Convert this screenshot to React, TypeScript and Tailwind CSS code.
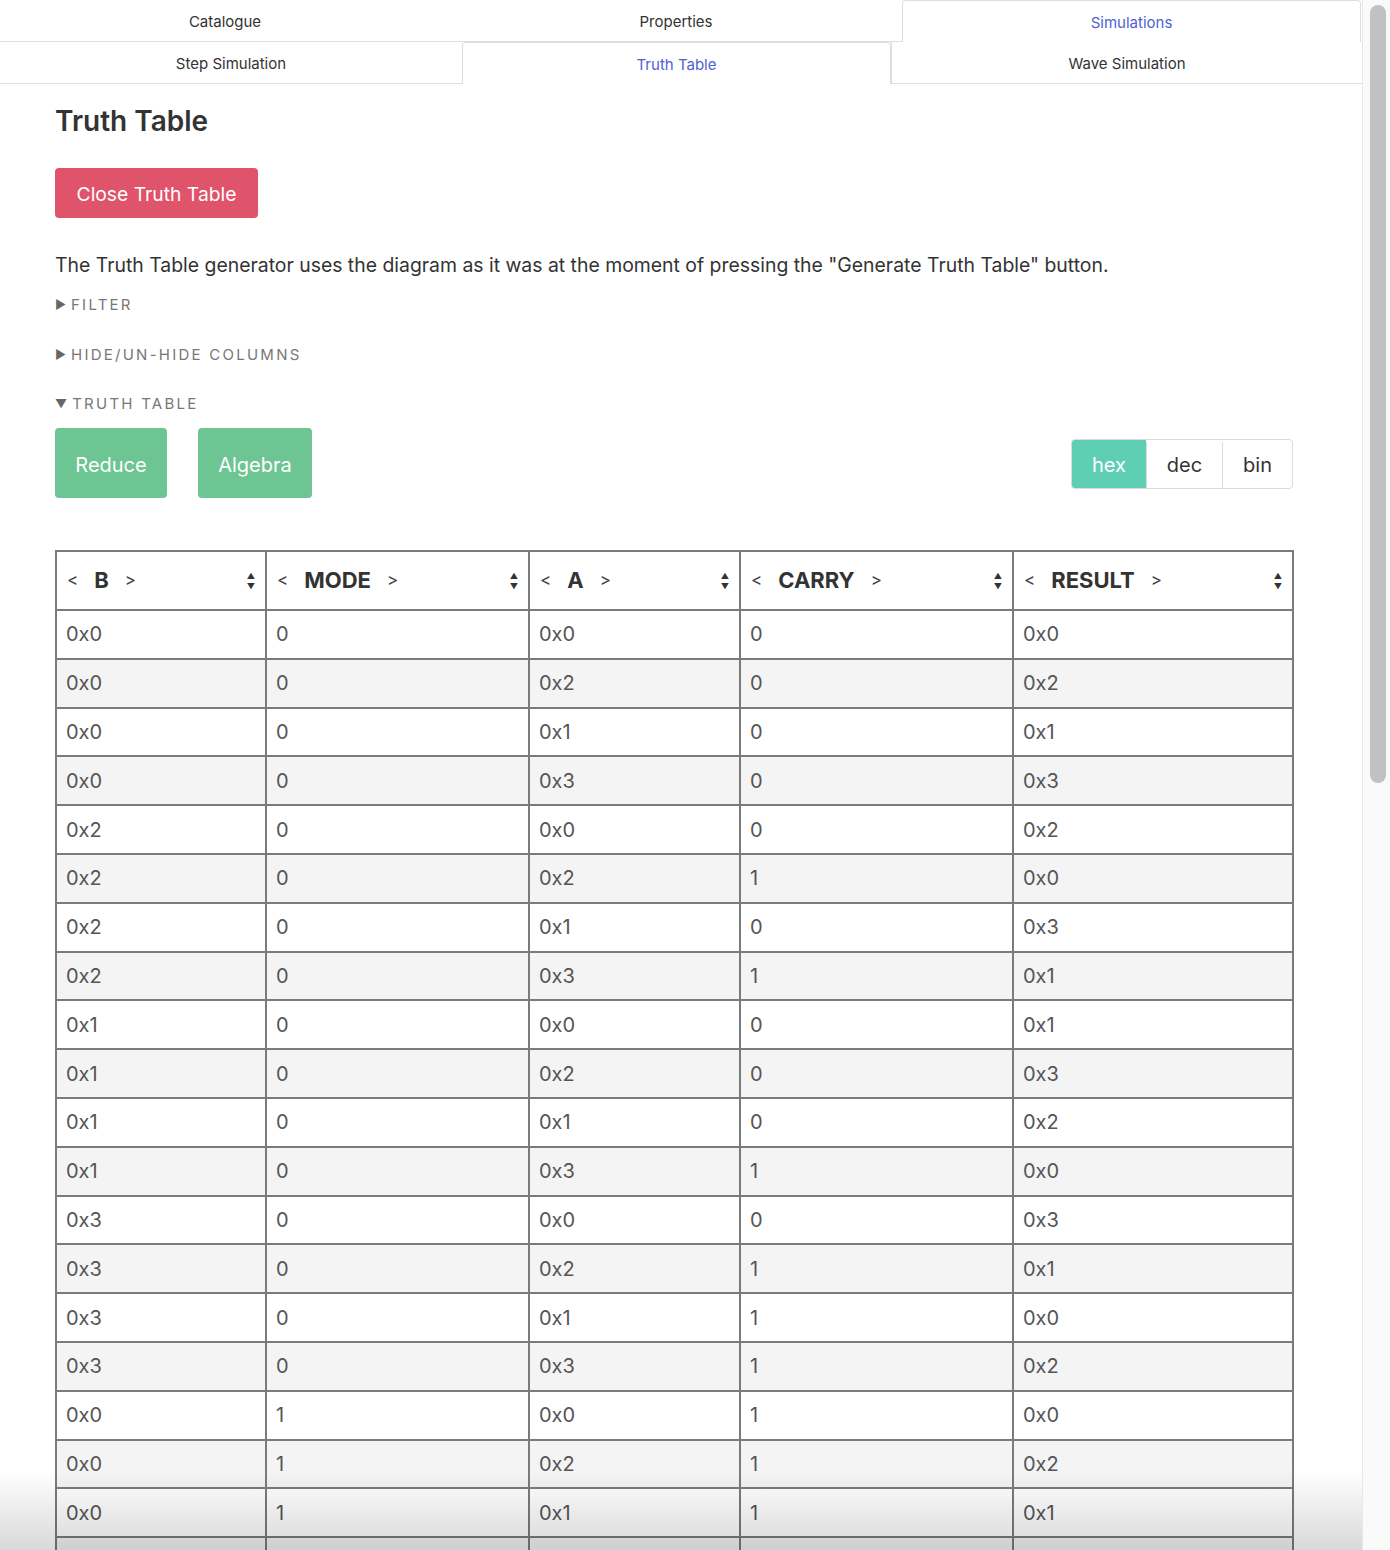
import React from "react";

type Row = [string, string, string, string, string];

const rows: Row[] = [
  ["0x0", "0", "0x0", "0", "0x0"],
  ["0x0", "0", "0x2", "0", "0x2"],
  ["0x0", "0", "0x1", "0", "0x1"],
  ["0x0", "0", "0x3", "0", "0x3"],
  ["0x2", "0", "0x0", "0", "0x2"],
  ["0x2", "0", "0x2", "1", "0x0"],
  ["0x2", "0", "0x1", "0", "0x3"],
  ["0x2", "0", "0x3", "1", "0x1"],
  ["0x1", "0", "0x0", "0", "0x1"],
  ["0x1", "0", "0x2", "0", "0x3"],
  ["0x1", "0", "0x1", "0", "0x2"],
  ["0x1", "0", "0x3", "1", "0x0"],
  ["0x3", "0", "0x0", "0", "0x3"],
  ["0x3", "0", "0x2", "1", "0x1"],
  ["0x3", "0", "0x1", "1", "0x0"],
  ["0x3", "0", "0x3", "1", "0x2"],
  ["0x0", "1", "0x0", "1", "0x0"],
  ["0x0", "1", "0x2", "1", "0x2"],
  ["0x0", "1", "0x1", "1", "0x1"],
  ["0x0", "1", "0x3", "0", "0x1"],
  ["0x2", "1", "0x0", "1", "0x2"],
];

const columns = [
  { name: "B", width: "w-[210px]" },
  { name: "MODE", width: "w-[263px]" },
  { name: "A", width: "w-[211px]" },
  { name: "CARRY", width: "w-[273px]" },
  { name: "RESULT", width: "w-[280px]" },
];

function Tab({
  label,
  active,
  className,
}: {
  label: string;
  active?: boolean;
  className?: string;
}) {
  return (
    <div
      className={
        "flex h-[42px] items-center justify-center pt-[3px] text-[15px] " +
        (active
          ? "rounded-t-[4px] border border-b-0 border-[#dedede] text-[#4c63d2] "
          : "border-b border-[#dedede] text-[#333] ") +
        (className ?? "")
      }
    >
      {label}
    </div>
  );
}

function Summary({ label, open }: { label: string; open?: boolean }) {
  return (
    <div className="flex h-[20px] items-center text-[15px] tracking-[0.15em] text-[#777]">
      <span className="mr-[5px] text-[12px] leading-none tracking-normal text-[#666]">
        {open ? "▼" : "▶"}
      </span>
      {label}
    </div>
  );
}

function SortIcon() {
  return (
    <span className="flex flex-col items-center text-[8px] leading-[10px] text-[#333]">
      <span>▲</span>
      <span>▼</span>
    </span>
  );
}

export default function App() {
  return (
    <div
      className="relative flex h-[1550px] w-[1390px] overflow-hidden bg-white"
      style={{ fontFamily: "Inter, 'Noto Sans', sans-serif" }}
    >
      <main className="w-[1362px] shrink-0">
        {/* tab rows */}
        <div className="flex">
          <Tab label="Catalogue" className="w-[450px]" />
          <Tab label="Properties" className="w-[452px]" />
          <Tab label="Simulations" active className="w-[459px]" />
          <div className="w-[1px]" />
        </div>
        <div className="flex">
          <Tab label="Step Simulation" className="w-[462px]" />
          <Tab label="Truth Table" active className="w-[429px]" />
          <Tab
            label="Wave Simulation"
            className="w-[471px] border-l border-l-[#dedede]"
          />
        </div>

        <section className="pl-[55px] pr-[69px]">
          <h1 className="mt-[20px] h-[34px] text-[28px] font-semibold leading-[34px] text-[#333]">
            Truth Table
          </h1>
          <button className="mt-[30px] h-[50px] w-[203px] rounded-[4px] bg-[#e0546b] pt-[2px] text-[19.3px] text-white">
            Close Truth Table
          </button>
          <p className="mt-[35px] text-[19.4px] leading-[24px] text-[#333]">
            The Truth Table generator uses the diagram as it was at the moment
            of pressing the "Generate Truth Table" button.
          </p>
          <div className="mt-[18px] flex flex-col gap-[30px]">
            <Summary label="FILTER" />
            <Summary label="HIDE/UN-HIDE COLUMNS" />
          </div>
          <div className="mt-[29px]">
            <Summary label="TRUTH TABLE" open />
          </div>

          <div className="mt-[14px] flex items-start">
            <button className="h-[70px] w-[112px] rounded-[4px] bg-[#6dc593] pt-[3px] text-[20px] text-white">
              Reduce
            </button>
            <button className="ml-[31px] h-[70px] w-[114px] rounded-[4px] bg-[#6dc593] pt-[3px] text-[20px] text-white">
              Algebra
            </button>
            <div className="ml-auto mt-[11px] flex h-[50px] overflow-hidden rounded-[4px] border border-[#dcdcdc] pt-[2px] text-[20px] text-[#333]">
              <div className="-mt-[2px] flex w-[74px] items-center justify-center bg-[#5ecfb3] pt-[2px] text-white">
                hex
              </div>
              <div className="flex w-[76px] items-center justify-center border-l border-[#dcdcdc]">
                dec
              </div>
              <div className="flex w-[70px] items-center justify-center border-l border-[#dcdcdc]">
                bin
              </div>
            </div>
          </div>

          <table className="mt-[52px] w-[1237px] table-fixed border-collapse border-2 border-[#7b7b7b]">
            <thead>
              <tr className="h-[59px]">
                {columns.map((c) => (
                  <th
                    key={c.name}
                    className={
                      c.width +
                      " border-2 border-[#7b7b7b] px-[10px] text-left align-middle"
                    }
                  >
                    <div className="flex items-center">
                      <span className="text-[17px] font-normal text-[#444]">
                        &lt;
                      </span>
                      <span className="mx-[16px] text-[22px] font-bold text-[#333]">
                        {c.name}
                      </span>
                      <span className="text-[17px] font-normal text-[#444]">
                        &gt;
                      </span>
                      <span className="ml-auto">
                        <SortIcon />
                      </span>
                    </div>
                  </th>
                ))}
              </tr>
            </thead>
            <tbody>
              {rows.map((r, i) => (
                <tr
                  key={i}
                  className={
                    "h-[48.8px] " + (i % 2 === 1 ? "bg-[#f4f4f4]" : "bg-white")
                  }
                >
                  {r.map((v, j) => (
                    <td
                      key={j}
                      className="border-2 border-[#7b7b7b] px-[9px] text-[20px] text-[#555]"
                    >
                      {v}
                    </td>
                  ))}
                </tr>
              ))}
            </tbody>
          </table>
        </section>
      </main>

      {/* scrollbar */}
      <div className="w-[28px] shrink-0 border-l border-[#e8e8e8] bg-[#fafafa] pl-[7px] pt-[5px]">
        <div className="h-[778px] w-[16px] rounded-full bg-[#c1c1c1]" />
      </div>

      {/* bottom fade */}
      <div className="pointer-events-none absolute bottom-0 left-0 h-[80px] w-[1362px] bg-gradient-to-b from-transparent to-black/15" />
    </div>
  );
}
